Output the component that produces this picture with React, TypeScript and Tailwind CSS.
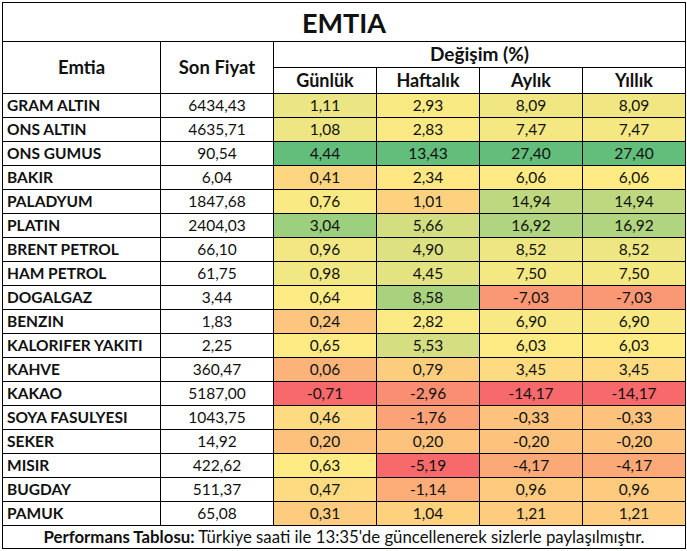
import React from "react";

type Row = [string, string, string, string, string, string];

const rows: Row[] = [
  ["GRAM ALTIN", "6434,43", "1,11", "2,93", "8,09", "8,09"],
  ["ONS ALTIN", "4635,71", "1,08", "2,83", "7,47", "7,47"],
  ["ONS GUMUS", "90,54", "4,44", "13,43", "27,40", "27,40"],
  ["BAKIR", "6,04", "0,41", "2,34", "6,06", "6,06"],
  ["PALADYUM", "1847,68", "0,76", "1,01", "14,94", "14,94"],
  ["PLATIN", "2404,03", "3,04", "5,66", "16,92", "16,92"],
  ["BRENT PETROL", "66,10", "0,96", "4,90", "8,52", "8,52"],
  ["HAM PETROL", "61,75", "0,98", "4,45", "7,50", "7,50"],
  ["DOGALGAZ", "3,44", "0,64", "8,58", "-7,03", "-7,03"],
  ["BENZIN", "1,83", "0,24", "2,82", "6,90", "6,90"],
  ["KALORIFER YAKITI", "2,25", "0,65", "5,53", "6,03", "6,03"],
  ["KAHVE", "360,47", "0,06", "0,79", "3,45", "3,45"],
  ["KAKAO", "5187,00", "-0,71", "-2,96", "-14,17", "-14,17"],
  ["SOYA FASULYESI", "1043,75", "0,46", "-1,76", "-0,33", "-0,33"],
  ["SEKER", "14,92", "0,20", "0,20", "-0,20", "-0,20"],
  ["MISIR", "422,62", "0,63", "-5,19", "-4,17", "-4,17"],
  ["BUGDAY", "511,37", "0,47", "-1,14", "0,96", "0,96"],
  ["PAMUK", "65,08", "0,31", "1,04", "1,21", "1,21"],
];

const num = (s: string) => parseFloat(s.replace(",", "."));

const RED = [248, 105, 107];
const YEL = [255, 235, 132];
const GRN = [99, 190, 123];

function lerp(a: number[], b: number[], t: number) {
  const c = a.map((x, i) => Math.round(x + (b[i] - x) * t));
  return `rgb(${c[0]}, ${c[1]}, ${c[2]})`;
}

// excel style 3-colour scale, midpoint = median of the column
function makeScale(col: number) {
  const vals = rows.map((r) => num(r[col])).sort((a, b) => a - b);
  const min = vals[0];
  const max = vals[vals.length - 1];
  const n = vals.length;
  const mid = n % 2 ? vals[(n - 1) / 2] : (vals[n / 2 - 1] + vals[n / 2]) / 2;
  return (v: number) => {
    if (v <= mid) return lerp(RED, YEL, mid === min ? 1 : (v - min) / (mid - min));
    return lerp(YEL, GRN, (v - mid) / (max - mid));
  };
}

const scales = [2, 3, 4, 5].map(makeScale);

export default function App() {
  return (
    <div className="bg-white w-[687px] h-[551px] pt-[2px] pl-[2px] font-['Lato',sans-serif] text-[#111]">
      <div className="grid w-[684px] grid-cols-[157px_112px_102px_102px_102px_102px] grid-rows-[38px_25px_25px_repeat(18,23px)_22px] gap-px bg-black p-px">
        {/* Title */}
        <div className="col-span-6 bg-white flex items-center justify-center pt-[3px] text-[27px] font-bold">
          EMTIA
        </div>

        {/* Header */}
        <div className="row-span-2 bg-white flex items-center justify-center text-[18.5px] font-bold">
          Emtia
        </div>
        <div className="row-span-2 bg-white flex items-center justify-center text-[18.5px] font-bold">
          Son Fiyat
        </div>
        <div className="col-span-4 bg-white flex items-center justify-center text-[19px] font-bold">
          Değişim (%)
        </div>
        {["Günlük", "Haftalık", "Aylık", "Yıllık"].map((h) => (
          <div key={h} className="bg-white flex items-center justify-center text-[18px] font-bold">
            {h}
          </div>
        ))}

        {/* Rows */}
        {rows.map((r) => (
          <React.Fragment key={r[0]}>
            <div className="bg-white flex items-center pl-[4px] text-[15.5px] font-bold">{r[0]}</div>
            <div className="bg-white flex items-center justify-center text-[15.5px]">{r[1]}</div>
            {[2, 3, 4, 5].map((c, i) => (
              <div
                key={c}
                className="flex items-center justify-center text-[15.5px]"
                style={{ backgroundColor: scales[i](num(r[c])) }}
              >
                {r[c]}
              </div>
            ))}
          </React.Fragment>
        ))}

        {/* Footer */}
        <div className="col-span-6 bg-white flex items-center justify-center text-[16.8px]">
          <span className="font-bold">Performans Tablosu:</span>
          <span>&nbsp;Türkiye saati ile 13:35'de güncellenerek sizlerle paylaşılmıştır.</span>
        </div>
      </div>
    </div>
  );
}
